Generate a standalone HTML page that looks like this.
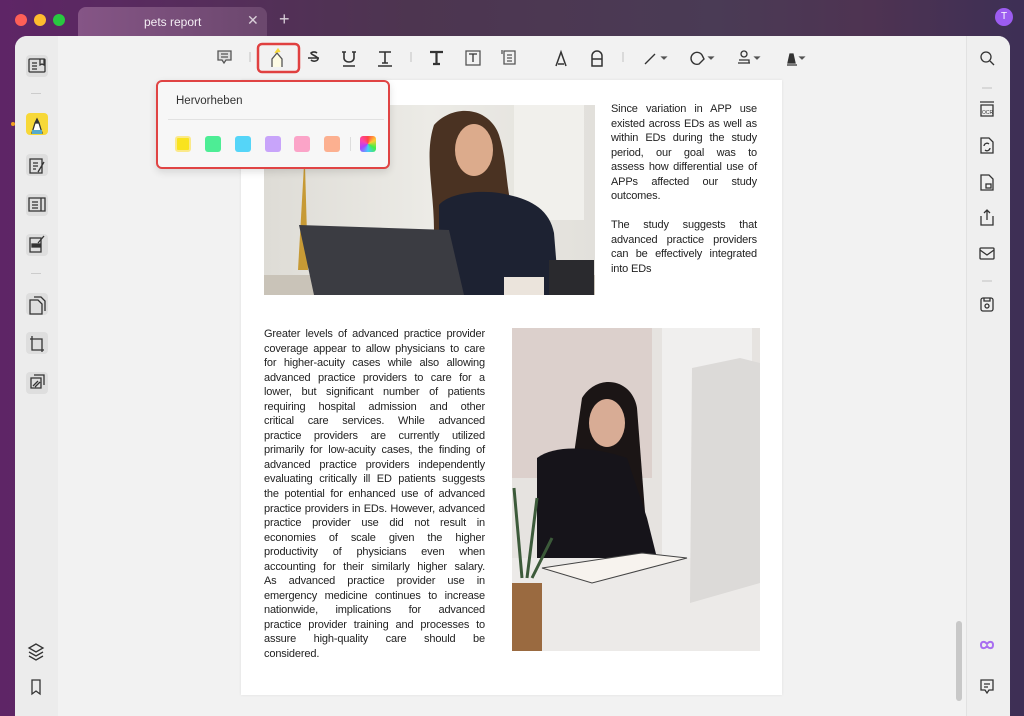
<!DOCTYPE html>
<html><head><meta charset="utf-8">
<style>
*{margin:0;padding:0;box-sizing:border-box}
body{width:1024px;height:709px;overflow:hidden;font-family:"Liberation Sans",sans-serif;background:linear-gradient(90deg,#5e2566 0%,#4d3550 40%,#4a3b55 70%,#4e3352 85%,#3d2f55 100%);position:relative}
.abs{position:absolute}
.dot{position:absolute;top:14px;width:12px;height:12px;border-radius:50%}
.win{position:absolute;left:15px;top:36px;width:995px;height:680px;background:#f2f2f2;border-radius:12px 12px 0 0;overflow:hidden}
.lsb{position:absolute;left:0;top:0;width:43px;height:100%;background:#ececec}
.rsb{position:absolute;left:951px;top:0;width:44px;height:100%;background:#efefef;border-left:1px solid #e2e2e2}
.ib{position:absolute;width:22px;height:22px;border-radius:4px;background:#dedede}
.page{position:absolute;left:241px;top:80px;width:541px;height:615px;background:#fff;box-shadow:0 0 3px rgba(0,0,0,.08)}
.txt{font-size:11px;line-height:14.55px;color:#222;position:absolute;letter-spacing:-0.15px}
.txt div{text-align:justify;text-align-last:justify;white-space:nowrap;overflow:visible}
.txt div.l{text-align-last:left}
.sw{position:absolute;top:136px;width:16px;height:16px;border-radius:3px}
svg{position:absolute;overflow:visible}
</style></head><body>
<div class="dot" style="left:15px;background:#fe5f57"></div>
<div class="dot" style="left:34px;background:#febc2e"></div>
<div class="dot" style="left:53px;background:#28c840"></div>
<div class="abs" style="left:78px;top:7px;width:189px;height:30px;background:linear-gradient(90deg,#8a5a8a,#6e4a70);border-radius:8px 8px 0 0;opacity:.9"></div>
<div class="abs" style="left:144px;top:15px;font-size:12px;color:#f4eef4">pets report</div>
<div class="abs" style="left:247px;top:12px;font-size:14px;color:#d9cfd9">✕</div>
<div class="abs" style="left:279px;top:9px;font-size:18px;color:#d9cfd9">+</div>
<div class="abs" style="left:995px;top:8px;width:18px;height:18px;border-radius:50%;background:#9c5cf0;color:#fff;font-size:10px;text-align:center;line-height:18px">T</div>

<div class="win">
 <div class="lsb"></div>
 <div class="rsb"></div>
 <div class="abs" style="left:941px;top:585px;width:6px;height:80px;border-radius:3px;background:#c8c8c8"></div>
</div>
<div class="ib" style="left:26px;top:55px"></div>
<div class="abs" style="left:31px;top:93px;width:10px;height:1px;background:#ccc"></div>
<div class="ib" style="left:26px;top:113px;background:#f7d838"></div>
<div class="abs" style="left:11px;top:122px;width:4px;height:4px;border-radius:50%;background:#f0a020"></div>
<div class="ib" style="left:26px;top:154px"></div>
<div class="ib" style="left:26px;top:194px"></div>
<div class="ib" style="left:26px;top:234px"></div>
<div class="abs" style="left:31px;top:273px;width:10px;height:1px;background:#ccc"></div>
<div class="ib" style="left:26px;top:293px"></div>
<div class="ib" style="left:26px;top:332px"></div>
<div class="ib" style="left:26px;top:372px"></div>
<svg width="1024" height="709" style="left:0;top:0" fill="none" stroke="#333" stroke-width="1.3">
 <rect x="29" y="59" width="16" height="13" rx="1"/><path d="M32 63h5M32 66h5M32 69h5M40 59v6l2-1 2 1v-6"/>
 <path d="M32 133l3-10h4l3 10z" fill="#fff"/><path d="M35 123l2-4 2 4" fill="#333"/><rect x="32" y="130" width="10" height="4" fill="#5ac" stroke="none"/>
 <path d="M30 159h12v14H30zM33 163h5M33 166h5M33 169h3M38 172l6-10"/>
 <path d="M29 198h16v13H29zM32 202h6M32 205h6M32 208h6M41 198v13"/>
 <path d="M30 238h11v14H30z"/><rect x="32" y="244" width="8" height="3" fill="#333"/><path d="M38 243l6-7"/>
 <path d="M30 300h8l4 4v10H30zM34 297h7l4 4v10"/>
 <path d="M32 336v14h12M30 339h12v13"/>
 <path d="M31 378h10v10H31zM34 375h10v10M33 386l5-5M35 387l5-5"/>
 <path d="M36 644l-7 4 7 4 7-4zM29 652l7 4 7-4M29 656l7 4 7-4" />
 <path d="M32 680h8v14l-4-3-4 3z"/>
 <circle cx="986" cy="57" r="5"/><path d="M990 61l4 4"/>
 <path d="M982 88h10" stroke="#ccc"/>
 <path d="M980 102h14M981 105h12v11h-12z"/><text x="982" y="114" font-size="5" fill="#333" stroke="none" font-family="Liberation Sans">OCR</text>
 <path d="M981 138h8l4 4v11h-12z"/><path d="M984 146a3 3 0 0 1 5-2M990 148a3 3 0 0 1-5 2"/>
 <path d="M981 175h8l4 4v11h-12z"/><rect x="986" y="184" width="5" height="4"/>
 <path d="M981 216v9h12v-9M987 220v-10M984 213l3-3 3 3"/>
 <rect x="980" y="248" width="14" height="11" rx="1"/><path d="M980 250l7 5 7-5"/>
 <path d="M982 281h10" stroke="#ccc"/>
 <rect x="981" y="298" width="12" height="13" rx="2"/><circle cx="987" cy="306" r="2"/><path d="M984 298v3h6v-3"/>
 <path d="M981 645c0-4 4-4 6-1 2-3 6-3 6 1s-4 4-6 1c-2 3-6 3-6-1z" stroke="#a86ef0" stroke-width="2"/>
 <path d="M981 680h12v10h-4l-2 3-2-3h-4zM984 684h6M984 687h4"/>
 <g stroke="#555">
 <path d="M218 51h13v9h-5l-2 3-2-3h-4zM221 54h7M221 57h7" fill="#ddd"/>
 <path d="M250 52v10M411 52v10M623 52v10" stroke="#ccc"/>
 <path d="M272 67v-8l5-6 5 6v8" fill="#fdfbe4"/><path d="M275 53l3-4 2 3" fill="#f7d838" stroke="#f7d838"/>
 <rect x="258" y="44" width="41" height="28" rx="4" stroke="#e04040" stroke-width="2.5"/>
 <path d="M308 58h11M317 53a4 3 0 0 0-6 0c0 2 7 3 7 6a4 3 0 0 1-7 1" stroke="#333" stroke-width="1.6"/>
 <path d="M344 52v6a5 4 0 0 0 10 0v-6M343 66h12M342 52h4M352 52h4" stroke="#333" stroke-width="1.6"/>
 <path d="M379 52h12M385 52v11M382 63h6M378 66h14" stroke="#333" stroke-width="1.6"/>
 <path d="M430 52h13M436.5 52v12M433 64h7" stroke="#333" stroke-width="2.2"/>
 <rect x="466" y="51" width="14" height="14"/><path d="M469 54h8M473 54v8" stroke="#333"/>
 <path d="M504 51h11v13h-11zM507 55h5M507 58h5M507 61h5M502 50v4"/>
 <path d="M556 66l5-14 5 14M558 64h6" stroke="#333" stroke-width="1.5"/>
 <path d="M592 66v-10a5 5 0 0 1 10 0v10zM592 59h10" stroke="#333" stroke-width="1.5"/>
 <path d="M645 64l10-10" stroke="#333"/><path d="M662 57l2 2 2-2z" fill="#333"/>
 <path d="M702 55a6 6 0 1 0-3 9l5-5z" stroke="#333" stroke-width="1.4"/><path d="M709 57l2 2 2-2z" fill="#333"/>
 <circle cx="744" cy="54" r="3" stroke="#333"/><path d="M738 63h12M739 60h10v3" stroke="#333"/><path d="M755 57l2 2 2-2z" fill="#333"/>
 <path d="M788 63l2-9h3l2 9zM787 65h10" stroke="#333" fill="#333"/><path d="M800 57l2 2 2-2z" fill="#333"/>
 </g>
</svg>

<div class="page">
 <svg width="331" height="190" style="left:23px;top:25px">
  <defs><linearGradient id="g1" x1="0" x2="1"><stop offset="0" stop-color="#dedcd6"/><stop offset=".5" stop-color="#ecebe6"/><stop offset="1" stop-color="#e2e0db"/></linearGradient></defs>
  <rect width="331" height="190" fill="url(#g1)"/>
  <rect x="250" y="0" width="70" height="115" fill="#f1f0ec"/>
  <rect x="0" y="170" width="331" height="20" fill="#c9c3b8"/>
  <path d="M40 60l-6 105h10l-3-105z" fill="#c79a35"/>
  <path d="M170 20c20-22 55-18 65 10 10 30 5 60 20 95l-85 0c0-40-10-75 0-105z" fill="#4a3222"/>
  <ellipse cx="210" cy="45" rx="19" ry="26" fill="#dcab8c"/>
  <path d="M175 100c10-12 40-15 60-12 30 5 50 15 55 40l5 62h-120z" fill="#1d2232"/>
  <rect x="285" y="155" width="45" height="35" fill="#2a2a2e"/>
  <path d="M35 120l150 5 15 65h-150z" fill="#3b3c42"/>
  <rect x="240" y="172" width="40" height="18" fill="#ebe4dc"/>
 </svg>
 <div class="txt" style="left:370px;top:22px;width:146px">
  <div>Since variation in APP use</div><div>existed across EDs as well as</div><div>within EDs during the study</div><div>period, our goal was to</div><div>assess how differential use of</div><div>APPs affected our study</div><div class="l">outcomes.</div>
  <div style="height:14.5px"></div>
  <div>The study suggests that</div><div>advanced practice providers</div><div>can be effectively integrated</div><div class="l">into EDs</div>
 </div>
 <div class="txt" style="left:23px;top:247px;width:221px">
  <div>Greater levels of advanced practice provider</div><div>coverage appear to allow physicians to care</div><div>for higher-acuity cases while also allowing</div><div>advanced practice providers to care for a</div><div>lower, but significant number of patients</div><div>requiring hospital admission and other</div><div>critical care services. While advanced</div><div>practice providers are currently utilized</div><div>primarily for low-acuity cases, the finding of</div><div>advanced practice providers independently</div><div>evaluating critically ill ED patients suggests</div><div>the potential for enhanced use of advanced</div><div>practice providers in EDs. However, advanced</div><div>practice provider use did not result in</div><div>economies of scale given the higher</div><div>productivity of physicians even when</div><div>accounting for their similarly higher salary.</div><div>As advanced practice provider use in</div><div>emergency medicine continues to increase</div><div>nationwide, implications for advanced</div><div>practice provider training and processes to</div><div>assure high-quality care should be</div><div class="l">considered.</div>
 </div>
 <svg width="248" height="323" style="left:271px;top:248px">
  <rect width="248" height="323" fill="#e6e3e0"/>
  <rect x="0" y="0" width="140" height="150" fill="#dcd0cc"/>
  <rect x="150" y="0" width="90" height="230" fill="#f0efee"/>
  <path d="M70 70c15-25 50-20 55 10l10 130h-85z" fill="#1b1515"/>
  <ellipse cx="95" cy="95" rx="18" ry="24" fill="#d8ac95"/>
  <path d="M25 130c20-15 60-10 90 0l20 60 10 40h-120z" fill="#16141a"/>
  <rect x="0" y="230" width="248" height="93" fill="#eceae8"/>
  <path d="M30 240l100-15 45 5-95 25z" fill="#f7f3ee" stroke="#444"/>
  <path d="M180 40l48-10 20 5v220l-70 20z" fill="#dcdad8"/>
  <rect x="0" y="255" width="30" height="68" fill="#9a6a40"/>
  <path d="M10 250l-8-90M15 250l10-80M20 250l20-40" stroke="#3c5a3a" stroke-width="3"/>
 </svg>
</div>

<div class="abs" style="left:156px;top:80px;width:234px;height:89px;background:#f7f7f7;border:2.5px solid #e04444;border-radius:6px;box-shadow:0 3px 8px rgba(0,0,0,.12)"></div>
<div class="abs" style="left:176px;top:95px;font-size:11.5px;color:#333">Hervorheben</div>
<div class="abs" style="left:168px;top:119px;width:216px;height:1px;background:#e2e2e2"></div>
<div class="sw" style="left:175px;background:#f9e31e;border:2px solid #fbe98a"></div>
<div class="sw" style="left:205px;background:#4ded95"></div>
<div class="sw" style="left:235px;background:#55d5f8"></div>
<div class="sw" style="left:265px;background:#c8a4fa"></div>
<div class="sw" style="left:294px;background:#fba4c8"></div>
<div class="sw" style="left:324px;background:#fcb090"></div>
<div class="abs" style="left:350px;top:137px;width:1px;height:14px;background:#ddd"></div>
<div class="sw" style="left:360px;background:conic-gradient(#f44,#fc3,#4e4,#4cf,#a4f,#f4a,#f44)"></div>
</body></html>
